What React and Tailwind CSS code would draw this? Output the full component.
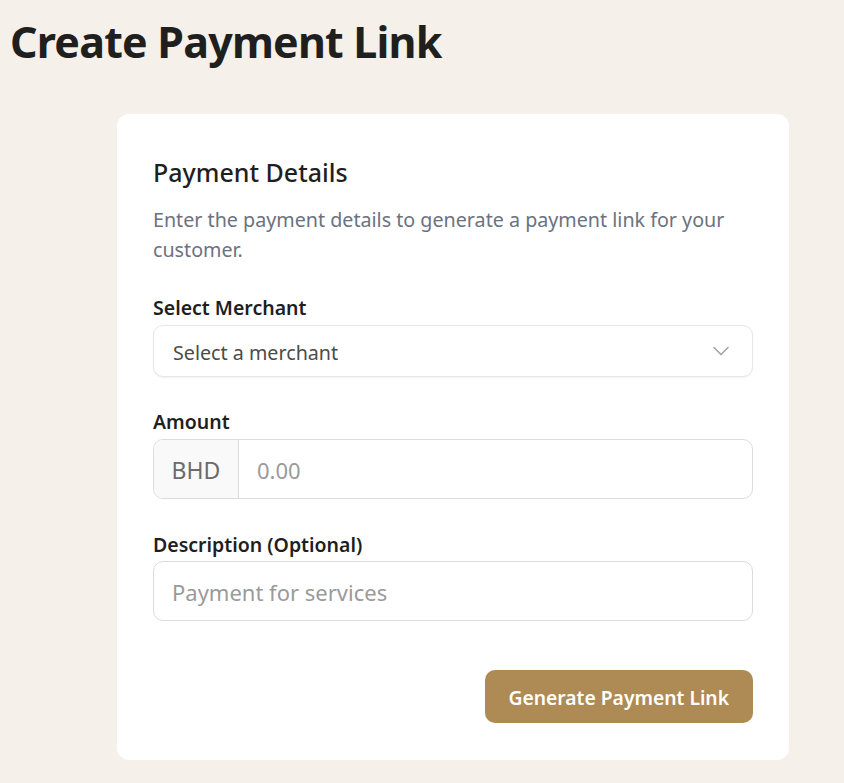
import { ChevronDown } from 'lucide-react';

export default function App() {
  return (
    <div className="min-h-screen bg-[#f5f0ea] font-['Noto_Sans',sans-serif] text-[#1f1f1f]">
      <h1 className="pl-[10px] pt-[14px] text-[43px] font-bold leading-[56px] tracking-[-0.8px]">Create Payment Link</h1>

      <div className="ml-[117px] mt-[44px] w-[672px] rounded-xl bg-white px-9 pt-[42px] pb-[37px]">
        <h2 className="text-[25px] font-medium leading-8">Payment Details</h2>
        <p className="mt-[17px] text-[19.7px] leading-[30px] text-[#6b7280]">
          Enter the payment details to generate a payment link for your customer.
        </p>

        <div className="mt-[30px]">
          <label className="block text-[19.5px] font-semibold leading-[26px]">Select Merchant</label>
          <button className="mt-[4px] flex h-[52px] w-full items-center justify-between rounded-[10px] border border-[#e5e7eb] bg-white pt-[3px] pl-[19px] pr-[17px] text-left text-[19.7px] text-[#4b4b4b] shadow-[0_1px_2px_rgba(0,0,0,0.06)]">
            <span>Select a merchant</span>
            <ChevronDown className="-mt-[3px] h-7 w-7 text-[#9ca3af]" strokeWidth={1.4} />
          </button>
        </div>

        <div className="mt-[32px]">
          <label className="block text-[19.5px] font-semibold leading-[26px]">Amount</label>
          <div className="mt-[4px] flex h-[60px] w-full overflow-hidden rounded-[10px] border border-[#dcdcdc]">
            <span className="flex w-[85px] items-center justify-center border-r border-[#dcdcdc] bg-[#f9f9f9] pt-[2px] text-[23px] text-[#6b6b6b]">BHD</span>
            <input
              placeholder="0.00"
              className="flex-1 px-[18px] pt-[2px] text-[22px] outline-none placeholder:text-[#9a9a9a]"
            />
          </div>
        </div>

        <div className="mt-[33px]">
          <label className="block text-[19.5px] font-semibold leading-[26px]">Description (Optional)</label>
          <input
            placeholder="Payment for services"
            className="mt-[3px] h-[60px] w-full rounded-[10px] border border-[#dcdcdc] px-[18px] pt-[2px] text-[22px] outline-none placeholder:text-[#9a9a9a]"
          />
        </div>

        <div className="mt-[49px] flex justify-end">
          <button className="h-[53px] rounded-[10px] bg-[#ae8b55] px-6 pt-[3px] text-[19.3px] font-semibold text-white">
            Generate Payment Link
          </button>
        </div>
      </div>
    </div>
  );
}
